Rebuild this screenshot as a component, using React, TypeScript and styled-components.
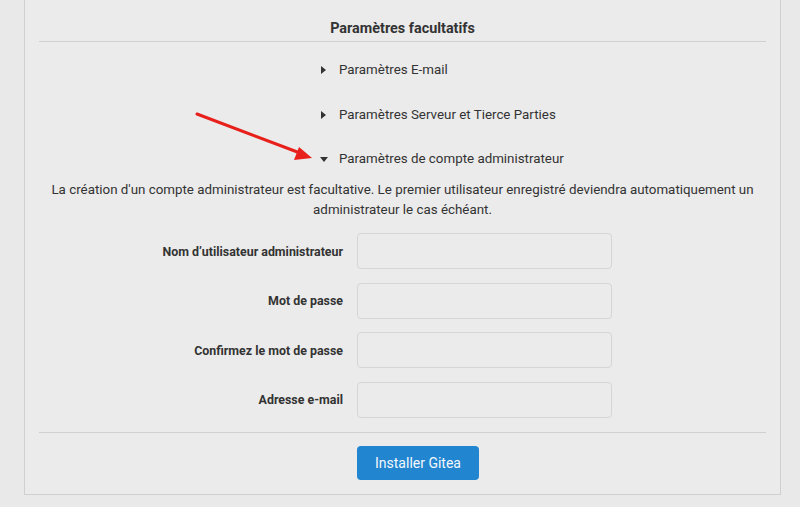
import React from 'react';
import styled, {createGlobalStyle} from 'styled-components';

const GlobalStyle = createGlobalStyle`
  html, body {
    margin: 0;
    padding: 0;
    background: #e9e9e9;
    font-family: Roboto, "Liberation Sans", Arial, sans-serif;
    color: #333333;
    -webkit-font-smoothing: antialiased;
  }
`

const Page = styled.div`
  position: relative;
  padding-left: 24px;
  width: 757px;
`

const Panel = styled.div`
  box-sizing: border-box;
  width: 757px;
  padding: 0 14px 14px;
  background: #ebebeb;
  border: 1px solid #d0d0d0;
  border-top: none;
`

const Title = styled.h4`
  margin: 0;
  padding: 20px 0 4px;
  font-size: 14.4px;
  line-height: 17px;
  font-weight: 700;
  text-align: center;
  color: #333333;
`

const Divider = styled.div`
  height: 1px;
  background: #d0d0d0;
`

const Accordion = styled.div`
  display: flex;
  flex-direction: column;
  gap: 24.5px;
  margin-top: 18px;
  padding-left: 281px;
`

const Summary = styled.div`
  display: flex;
  align-items: center;
  font-size: 13.35px;
  line-height: 20px;
  color: #333333;
`

const Caret = styled.span<{ open?: boolean }>`
  display: inline-block;
  width: 0;
  height: 0;
  margin-right: ${p => (p.open ? '11px' : '13px')};
  margin-left: ${p => (p.open ? '0' : '1px')};
  border-style: solid;
  border-color: transparent;
  ${p => p.open
    ? `border-width: 5px 4px 0 4px; border-top-color: #333333;`
    : `border-width: 4px 0 4px 5px; border-left-color: #333333;`}
`

const Description = styled.p`
  margin: 11px 0 0;
  font-size: 13.35px;
  line-height: 20px;
  text-align: center;
  color: #333333;
`

const Form = styled.div`
  display: grid;
  grid-template-columns: 304px 255px;
  column-gap: 14px;
  row-gap: 13.5px;
  margin-top: 13px;
  margin-bottom: 14px;
`

const Label = styled.label`
  font-size: 12.4px;
  font-weight: 700;
  text-align: right;
  align-self: center;
  color: #333333;
`

const Input = styled.input`
  box-sizing: border-box;
  height: 36px;
  width: 255px;
  padding: 0 12px;
  background: #ebebeb;
  border: 1px solid #d5d5d5;
  border-radius: 4px;
  font: inherit;
  outline: none;
`

const Actions = styled.div`
  display: grid;
  grid-template-columns: 304px auto;
  column-gap: 14px;
  margin-top: 13px;
`

const Button = styled.button`
  grid-column: 2;
  justify-self: start;
  width: 122px;
  height: 34px;
  padding: 0;
  border: none;
  border-radius: 4px;
  background: #2185d0;
  color: #f4f8fc;
  font-family: Roboto, "Liberation Sans", Arial, sans-serif;
  font-size: 14px;
  cursor: pointer;
`

const Arrow = styled.svg`
  position: absolute;
  left: 190px;
  top: 108px;
  pointer-events: none;
`

const sections = [
    {label: 'Paramètres E-mail', open: false},
    {label: 'Paramètres Serveur et Tierce Parties', open: false},
    {label: 'Paramètres de compte administrateur', open: true},
]

const fields = [
    {label: 'Nom d’utilisateur administrateur', type: 'text'},
    {label: 'Mot de passe', type: 'password'},
    {label: 'Confirmez le mot de passe', type: 'password'},
    {label: 'Adresse e-mail', type: 'email'},
]

function App() {
    return (
        <>
            <GlobalStyle/>
            <Page>
                <Panel>
                    <Title>Paramètres facultatifs</Title>
                    <Divider/>
                    <Accordion>
                        {sections.map(s => (
                            <Summary key={s.label}>
                                <Caret open={s.open}/>
                                {s.label}
                            </Summary>
                        ))}
                    </Accordion>
                    <Description>
                        La création d'un compte administrateur est facultative. Le premier utilisateur enregistré deviendra automatiquement un administrateur le cas échéant.
                    </Description>
                    <Form>
                        {fields.map(f => (
                            <React.Fragment key={f.label}>
                                <Label>{f.label}</Label>
                                <Input type={f.type}/>
                            </React.Fragment>
                        ))}
                    </Form>
                    <Divider/>
                    <Actions>
                        <Button>Installer Gitea</Button>
                    </Actions>
                </Panel>
                <Arrow width="130" height="60" viewBox="0 0 130 60">
                    <line x1="7" y1="6" x2="110" y2="45" stroke="#e8201c" strokeWidth="3" strokeLinecap="round"/>
                    <polygon points="122,50 104,52 109,39" fill="#e8201c"/>
                </Arrow>
            </Page>
        </>
    );
}

export default App;
